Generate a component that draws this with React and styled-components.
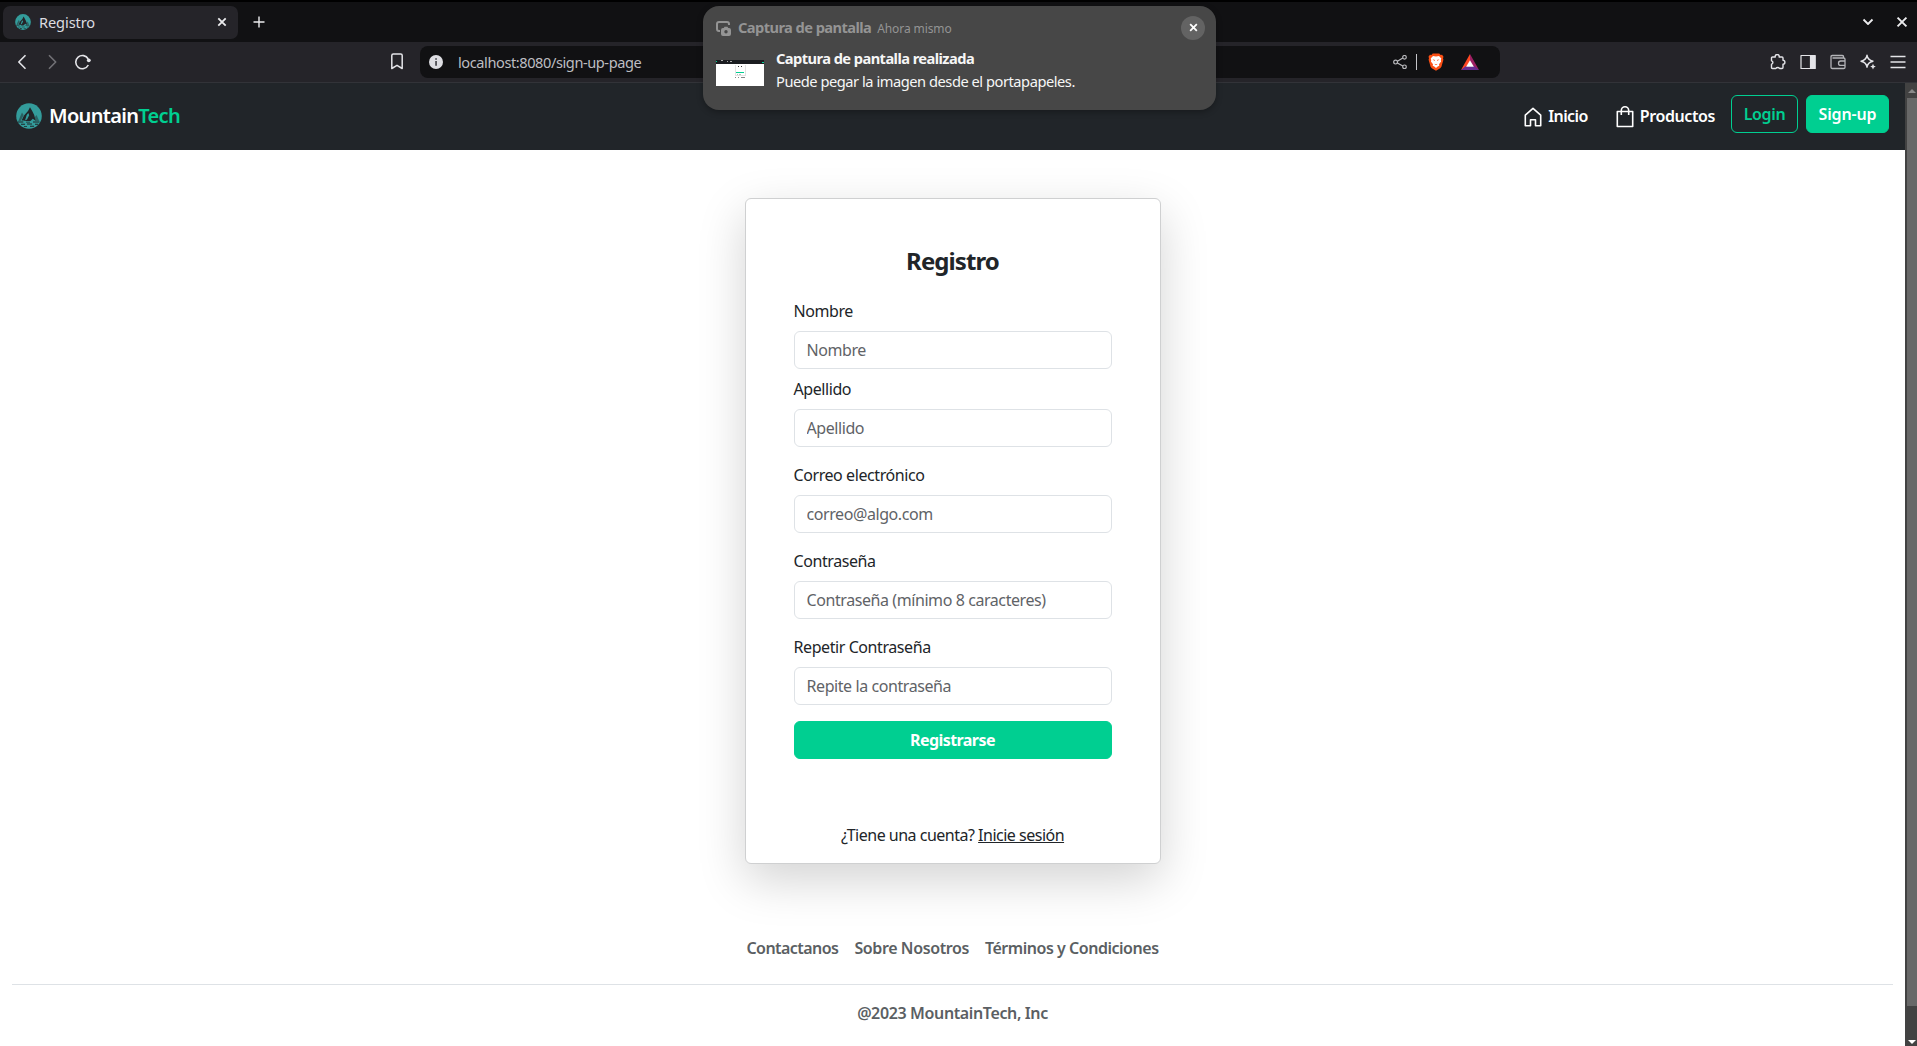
import React from 'react';
import styled, { createGlobalStyle, css } from 'styled-components';

const GlobalStyle = createGlobalStyle`
  *, *::before, *::after { box-sizing: border-box; }
  body { margin: 0; overflow: hidden; }
  svg { display: block; flex: none; }
`;

const Screen = styled.div`
  position: relative;
  display: flex;
  flex-direction: column;
  width: 1917px;
  height: 1046px;
  overflow: hidden;
  background: #fff;
  font-family: 'Noto Sans', sans-serif;
`;

/* ---------- browser chrome ---------- */

const TabStrip = styled.header`
  display: flex;
  align-items: center;
  height: 42px;
  flex: none;
  padding: 0 9px 0 3px;
  border-top: 2px solid #000;
  background: #111113;
  color: #ececee;
`;

const Tab = styled.div`
  display: flex;
  align-items: center;
  width: 235px;
  height: 33px;
  padding: 0 11px 0 12px;
  border-radius: 7px;
  background: #252429;
`;

const TabTitle = styled.span`
  flex: 1;
  padding: 0 0 1px 8px;
  font-size: 14.6px;
  letter-spacing: -0.1px;
  color: #dcdce0;
`;

const NewTab = styled.div`
  margin-left: 15px;
`;

const WindowControls = styled.div`
  display: flex;
  align-items: center;
  gap: 22px;
  margin-left: auto;
`;

const Toolbar = styled.div`
  display: flex;
  align-items: center;
  height: 41px;
  flex: none;
  padding: 0 11px 1px 14px;
  border-bottom: 1px solid #323338;
  background: #252429;
  color: #e4e4e8;
`;

const NavButtons = styled.div`
  display: flex;
  align-items: center;
  gap: 15px;
  width: 376px;
`;

const Omnibox = styled.div`
  display: flex;
  align-items: center;
  width: 1080px;
  height: 32px;
  margin-left: 16px;
  margin-right: auto;
  padding: 0 21px 0 9px;
  border-radius: 8px;
  background: #111113;
`;

const Url = styled.span`
  flex: 1;
  padding-left: 15px;
  font-size: 14.6px;
  letter-spacing: -0.43px;
  color: #bdbdc1;
`;

const Divider = styled.i`
  width: 1px;
  height: 16px;
  margin: 0 11px 0 9px;
  background: #c4c4c8;
`;

const RewardsIcon = styled.span`
  margin-left: 17px;
`;

const Extensions = styled.div`
  display: flex;
  align-items: center;
  gap: 14px;
`;

/* ---------- page ---------- */

const Viewport = styled.div`
  display: flex;
  flex: 1;
  min-height: 0;
`;

const Page = styled.main`
  display: flex;
  flex-direction: column;
  align-items: center;
  width: 1905px;
  background: #fff;
  color: #212529;
  font-size: 16px;
  line-height: 24px;
  letter-spacing: -0.42px;
`;

const Scrollbar = styled.aside`
  display: flex;
  flex-direction: column;
  justify-content: space-between;
  align-items: flex-end;
  width: 12px;
  background: #424242;
`;

const ScrollThumb = styled.div`
  width: 10px;
  height: 908px;
  background: #686868;
`;

const ScrollArrow = styled.div`
  display: flex;
  align-items: ${(p) => (p.$end ? 'flex-end' : 'center')};
  justify-content: center;
  width: 11px;
  height: ${(p) => (p.$end ? 40 : 15)}px;
  padding-bottom: ${(p) => (p.$end ? 2 : 0)}px;
`;

const Navbar = styled.nav`
  display: flex;
  align-items: center;
  align-self: stretch;
  height: 67px;
  flex: none;
  padding: 0 16px 2px 16px;
  background: #212529;
  color: #fff;
  font-weight: 600;
`;

const Brand = styled.a`
  display: flex;
  align-items: center;
  gap: 7px;
  margin-right: auto;
  font-size: 20px;
  letter-spacing: -0.68px;
`;

const Accent = styled.span`
  color: #00cf91;
`;

const NavLink = styled.a`
  display: flex;
  align-items: center;
  gap: 6px;
  margin-right: ${(p) => p.$after}px;
  letter-spacing: ${(p) => p.$track}px;

  svg { margin-top: 3px; }
`;

const buttonBase = css`
  display: flex;
  align-items: center;
  justify-content: center;
  height: 38px;
  border: 1px solid #00cf91;
  border-radius: 6px;
  font-weight: 600;
`;

const NavButton = styled.a`
  ${buttonBase}
  width: ${(p) => p.$width}px;
  margin: -3px 0 0 ${(p) => (p.$filled ? 8 : 0)}px;
  background: ${(p) => (p.$filled ? '#00cf91' : 'transparent')};
  color: ${(p) => (p.$filled ? '#fff' : '#00cf91')};
  letter-spacing: ${(p) => (p.$filled ? -0.15 : -0.35)}px;
`;

const Card = styled.section`
  width: 416px;
  height: 666px;
  flex: none;
  margin-top: 48px;
  padding: 47px 48px 0;
  border: 1px solid #cfd0d1;
  border-radius: 6px;
  background: #fff;
  box-shadow: 0 16px 48px rgba(0, 0, 0, 0.175);
`;

const Title = styled.h1`
  margin: 0 0 24px;
  font-size: 24px;
  font-weight: 700;
  line-height: 29px;
  letter-spacing: -0.9px;
  text-align: center;
`;

const Field = styled.label`
  display: flex;
  flex-direction: column;
  gap: 8px;
  margin-bottom: ${(p) => p.$after}px;
`;

const Input = styled.input`
  width: 100%;
  height: 38px;
  padding: 6px 12px;
  border: 1px solid #dee2e6;
  border-radius: 6px;
  background: #fff;
  font: inherit;
  letter-spacing: inherit;

  &::placeholder { color: #5f6367; opacity: 1; }
`;

const Submit = styled.button`
  ${buttonBase}
  width: 100%;
  padding: 0;
  background: #00cf91;
  color: #fff;
  font: inherit;
  font-weight: 700;
  letter-spacing: -0.57px;
`;

const LoginPrompt = styled.p`
  margin: 64px 0 0;
  text-align: center;
  letter-spacing: -0.5px;

  a { text-decoration: underline; }
`;

const Footer = styled.footer`
  display: flex;
  flex-direction: column;
  align-self: stretch;
  margin: 72px 12px 0;
  color: #5b5f63;
  font-weight: 600;
  text-align: center;
`;

const FooterLinks = styled.div`
  display: flex;
  justify-content: center;
  gap: 16px;
  padding-bottom: 24px;
  border-bottom: 1px solid #dee2e6;
`;

const FooterText = styled.span`
  letter-spacing: ${(p) => p.$track}px;
`;

const Copyright = styled.p`
  margin: 16px 0 0;
  letter-spacing: -0.37px;
`;

/* ---------- desktop notification ---------- */

const Notification = styled.div`
  position: absolute;
  top: 6px;
  left: 703px;
  display: flex;
  flex-direction: column;
  width: 513px;
  height: 104px;
  padding: 10px 11px 0 13px;
  border-radius: 16px;
  background: #474747;
  box-shadow: 0 2px 6px rgba(0, 0, 0, 0.3);
  color: #f6f6f6;
  font-size: 14.67px;
  line-height: 23px;
`;

const NotificationHead = styled.div`
  display: flex;
  align-items: center;
  height: 24px;
  color: #949494;
`;

const AppName = styled.strong`
  margin: -2px 0 0 7px;
  font-weight: 700;
  letter-spacing: -0.58px;
`;

const Time = styled.span`
  flex: 1;
  margin: 0 0 0 6px;
  font-size: 12px;
  letter-spacing: -0.1px;
`;

const CloseButton = styled.span`
  display: flex;
  align-items: center;
  justify-content: center;
  width: 24px;
  height: 24px;
  margin-top: -1px;
  border-radius: 50%;
  background: #636363;
  color: #fff;
`;

const NotificationBody = styled.div`
  display: flex;
  align-items: center;
  gap: 12px;
  margin-top: 7px;

  svg { margin-top: 6px; }
`;

const Message = styled.div`
  display: flex;
  flex-direction: column;
  letter-spacing: -0.47px;

  strong { font-weight: 700; letter-spacing: -0.57px; }
`;

/* ---------- drawings ---------- */

const MountainLogo = ({ size, ink }) => (
  <svg width={size} height={size} viewBox="0 0 26 26">
    <circle cx="13" cy="13" r="12.8" fill="#339c9b" />
    <g fill={ink}>
      <path d="M14 4.200 16.200 8l2 4 1.400 5.700-2.800-2-2.300 2.200H8l3-1.500 2.200-4.200-.9-2.200-1.600 2L9 17.600H5.600l2.400-5L12 8z" />
      <path d="m6 9.600 1.600 2.400-3 6L2.400 18l1.800-4.500z" opacity=".5" />
      <path d="m20.600 12 2.600 6h-3.800l-1.300-3z" opacity=".45" />
      <path d="M1.800 18.500h5.500v1H1.800zM10 18.700h4v.9h-4zM17 18.500h6.500v1H17zM5 20.800h4v.9H5zM11 20.600h5v.9h-5zM19 20.800h3v.9h-3zM8 22.900h3v.9H8zM14 22.800h4v.9h-4z" />
    </g>
  </svg>
);

const Cross = ({ size, width }) => (
  <svg width={size} height={size} viewBox="0 0 10 10" stroke="currentColor" strokeWidth={width}>
    <path d="m1.300 1.300 7.400 7.400M8.700 1.300 1.300 8.700" />
  </svg>
);

const Line = ({ w, h, d, opacity = 1, weight = 1.4, children }) => (
  <svg
    width={w}
    height={h}
    viewBox={`0 0 ${w} ${h}`}
    fill="none"
    stroke="currentColor"
    strokeWidth={weight}
    strokeLinejoin="round"
    opacity={opacity}
  >
    <path d={d} />
    {children}
  </svg>
);

const BraveLion = () => (
  <svg width="16" height="18" viewBox="0 0 16 18">
    <path d="M4.700.5h6.600l1.300 1.400 1.500-.2 1.400 2-.5 1.600.4 1.400-2 7.100-1.200 1.500L8 17.800l-4.200-2.500-1.200-1.500L.6 6.700 1 5.300.5 3.700l1.400-2 1.500.2z" fill="#fb4f14" />
    <path d="M5 2.900 8 3.400l3-.5 2.300 2.600-.5 1.700.3 1.300-2.100 2.800.3 1.400-1.600.8L8 15l-1.700-1.500-1.600-.8.3-1.400-2.100-2.800.3-1.300-.5-1.700z" fill="#fff" />
    <path d="m4.600 6.300 2.400.6-.6 1zM11.400 6.300 9 6.900l.6 1zM6.500 10.800l1.500.6 1.500-.6-.8 1.300H7.300z" fill="#fb4f14" />
  </svg>
);

const BatTriangle = () => (
  <svg width="18" height="16" viewBox="0 0 18 16">
    <path d="M9 0 0 16l9-5.500z" fill="#ff4724" />
    <path d="m9 0 9 16-9-5.500z" fill="#9e1f63" />
    <path d="m0 16 4.600-3.800h8.800L18 16z" fill="#662d91" />
    <path d="m9 6.200 3.900 6.600H5.100z" fill="#fff" />
  </svg>
);

const ScreenshotIcon = () => (
  <svg width="15" height="15" viewBox="0 0 15 15" fill="none" stroke="currentColor" strokeWidth="2">
    <path d="M4 10H3a2 2 0 0 1-2-2V3a2 2 0 0 1 2-2h8a2 2 0 0 1 2 2v1" />
    <path d="M7 7h.8l.7-1.200h3L12.200 7h.8a2 2 0 0 1 2 2v4a2 2 0 0 1-2 2H7a2 2 0 0 1-2-2V9a2 2 0 0 1 2-2z" fill="currentColor" stroke="none" />
    <circle cx="10" cy="10.700" r="1.700" fill="#474747" stroke="none" />
  </svg>
);

const Thumbnail = () => (
  <svg width="48" height="26" viewBox="0 0 48 26" shapeRendering="crispEdges">
    <path d="M0 0h48v26H0z" fill="#fff" />
    <path d="M0 0h48v4H0z" fill="#1a1c20" />
    <path d="M5 0h2v1H5zM11 1h1v1h-1zM14 1h2v1h-2z" fill="#aaa" />
    <path d="M0 1h1v1H0zM46 2h2v1h-2z" fill="#00cf91" />
    <path d="M19 5h1v10h-1zM29 5h1v10h-1zM19 15h11v1H19z" fill="#e2e2e2" />
    <path d="M22 6h1v1h-1zM25 6h1v1h-1z" fill="#333" />
    <path d="M20 12h8v1h-8z" fill="#00cf91" />
    <path d="M21 14h1v1h-1zM23 14h2v1h-2z" fill="#bbb" />
    <path d="M19 17h1v1h-1zM22 17h1v1h-1zM25 17h4v1h-4z" fill="#888" />
  </svg>
);

const InfoIcon = () => (
  <svg width="14" height="14" viewBox="0 0 14 14">
    <circle cx="7" cy="7" r="7" fill="#dedee3" />
    <path d="M6.200 3.200h1.700v1.600H6.200zM6.200 6h1.700v4.700H6.200z" fill="#45454b" />
  </svg>
);

const fields = [
  { label: 'Nombre', hint: 'Nombre', after: 8 },
  { label: 'Apellido', hint: 'Apellido', after: 16 },
  { label: 'Correo electrónico', hint: 'correo@algo.com', after: 16 },
  { label: 'Contraseña', hint: 'Contraseña (mínimo 8 caracteres)', after: 16 },
  { label: 'Repetir Contraseña', hint: 'Repite la contraseña', after: 16 },
];

export default function App() {
  return (
    <Screen>
      <GlobalStyle />
      <TabStrip>
        <Tab>
          <MountainLogo size={16} ink="#252429" />
          <TabTitle>Registro</TabTitle>
          <Cross size={10} width={1.8} />
        </Tab>
        <NewTab>
          <Line w={12} h={12} d="M6 .5v11M.5 6h11" />
        </NewTab>
        <WindowControls>
          <Line w={12} h={8} weight={1.8} d="m1.500 1.500 4.500 4.500 4.500-4.500" />
          <Cross size={12} width={1.6} />
        </WindowControls>
      </TabStrip>

      <Toolbar>
        <NavButtons>
          <Line w={15} h={16} weight={1.6} d="M11.500 1.200 4.800 8l6.700 6.800" />
          <Line w={15} h={16} weight={1.6} opacity={0.4} d="m5 1.200 6.700 6.800L5 14.800" />
          <Line w={18} h={16} weight={1.6} d="M14.200 5A6.600 6.600 0 1 0 14.300 11">
            <circle cx="14.800" cy="6.300" r="1.900" fill="currentColor" stroke="none" />
          </Line>
        </NavButtons>
        <Line w={14} h={17} weight={1.5} d="M1.800 2.500q0-1.500 1.500-1.500h7.400q1.500 0 1.500 1.500V15.500L7 12.300 1.800 15.500z" />
        <Omnibox>
          <InfoIcon />
          <Url>localhost:8080/sign-up-page</Url>
          <Line w={14} h={14} weight={1.2} opacity={0.8} d="M4.400 6.300 9.800 3M4.400 7.900l5.400 3.200">
            <circle cx="2.600" cy="7.100" r="1.900" />
            <circle cx="11.500" cy="2.300" r="1.800" />
            <circle cx="11.500" cy="11.800" r="1.800" />
          </Line>
          <Divider />
          <BraveLion />
          <RewardsIcon>
            <BatTriangle />
          </RewardsIcon>
        </Omnibox>
        <Extensions>
          <Line w={16} h={16} weight={1.4} d="M2.500 3h2.800a2 1.900 0 1 1 3.800 0H12q1 0 1 1v2.300a1.900 1.900 0 1 1 0 3.800v3.400q0 1-1 1H9.600a2 1.700 0 0 0-3.700 0H2.500q-1 0-1-1v-3.200a1.800 1.800 0 0 0 0-3.500V4q0-1 1-1z" />
          <Line w={16} h={16} weight={1.2} d="M1 1.500h14v13H1z">
            <path d="M10.500 1.500H15v13h-4.500z" fill="currentColor" />
          </Line>
          <Line w={16} h={16} weight={1.3} opacity={0.75} d="M13.500 4V2.800q0-1.300-1.300-1.300H2.300Q1 1.500 1 2.800v10.400q0 1.300 1.300 1.300h11.400q1.300 0 1.300-1.300V5.300Q15 4 13.700 4H2.500">
            <path d="M15 7h-4.300a2.200 2.200 0 0 0 0 4.400H15" />
          </Line>
          <Line w={16} h={16} weight={1.4} d="M7 1.200q.7 5 6 6-5.300 1-6 6-.7-5-6-6 5.300-1 6-6z">
            <path d="m13 9.800.9 1.900 1.900.9-1.900.9-.9 1.900-.9-1.900-1.900-.9 1.900-.9z" fill="currentColor" stroke="none" />
          </Line>
          <Line w={16} h={14} weight={1.4} d="M.5 1.500h15M.5 7h15M.5 12.500h15" />
        </Extensions>
      </Toolbar>

      <Viewport>
        <Page>
          <Navbar>
            <Brand>
              <MountainLogo size={26} ink="#212529" />
              <span>Mountain<Accent>Tech</Accent></span>
            </Brand>
            <NavLink $after={28} $track={-0.6}>
              <Line w={18} h={20} weight={1.6} d="M1.300 8.200 9 1.300l7.700 6.900v10.500h-5.200v-6h-5v6H1.300z" />
              Inicio
            </NavLink>
            <NavLink $after={16} $track={-0.4}>
              <Line w={18} h={22} weight={1.6} d="M1.300 5.500h15.400v15H1.300zM5.300 9V4.500a3.700 3.700 0 0 1 7.400 0V9" />
              Productos
            </NavLink>
            <NavButton $width={67}>Login</NavButton>
            <NavButton $width={83} $filled>Sign-up</NavButton>
          </Navbar>

          <Card>
            <Title>Registro</Title>
            {fields.map((f) => (
              <Field key={f.label} $after={f.after}>
                {f.label}
                <Input placeholder={f.hint} />
              </Field>
            ))}
            <Submit>Registrarse</Submit>
            <LoginPrompt>
              ¿Tiene una cuenta? <a>Inicie sesión</a>
            </LoginPrompt>
          </Card>

          <Footer>
            <FooterLinks>
              <FooterText $track={-0.55}>Contactanos</FooterText>
              <FooterText $track={-0.39}>Sobre Nosotros</FooterText>
              <FooterText $track={-0.47}>Términos y Condiciones</FooterText>
            </FooterLinks>
            <Copyright>@2023 MountainTech, Inc</Copyright>
          </Footer>
        </Page>
        <Scrollbar>
          <ScrollArrow>
            <svg width="8" height="4" viewBox="0 0 8 4"><path d="m0 4 4-4 4 4z" fill="#8a8a8a" /></svg>
          </ScrollArrow>
          <ScrollThumb />
          <ScrollArrow $end>
            <svg width="8" height="4" viewBox="0 0 8 4"><path d="m0 0 4 4 4-4z" fill="#fff" /></svg>
          </ScrollArrow>
        </Scrollbar>
      </Viewport>

      <Notification>
        <NotificationHead>
          <ScreenshotIcon />
          <AppName>Captura de pantalla</AppName>
          <Time>Ahora mismo</Time>
          <CloseButton>
            <Cross size={9} width={2} />
          </CloseButton>
        </NotificationHead>
        <NotificationBody>
          <Thumbnail />
          <Message>
            <strong>Captura de pantalla realizada</strong>
            <span>Puede pegar la imagen desde el portapapeles.</span>
          </Message>
        </NotificationBody>
      </Notification>
    </Screen>
  );
}
